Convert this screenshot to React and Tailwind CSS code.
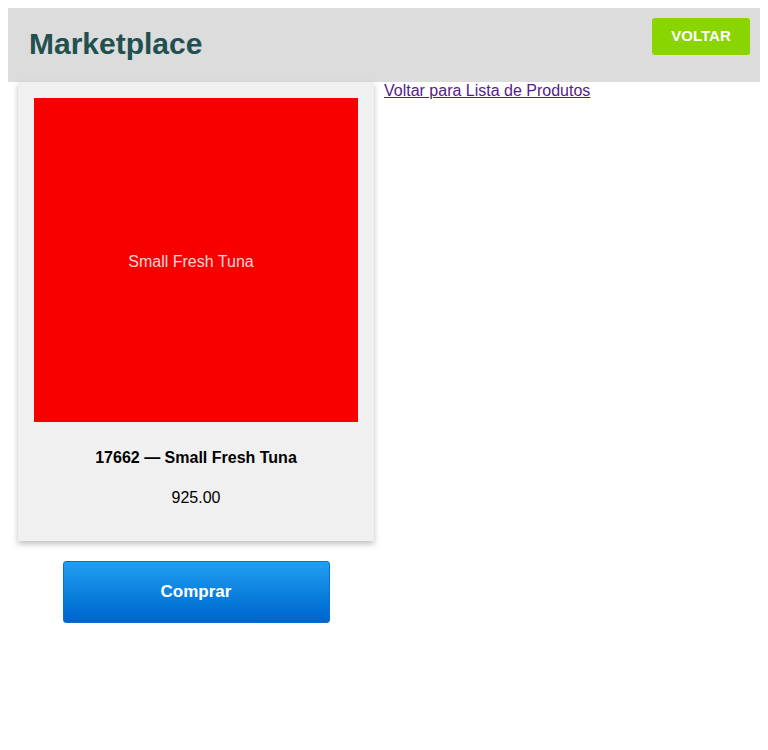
export default function App() {
  return (
    <div className="m-2 min-h-[734px] bg-white text-black" style={{ fontFamily: '"Liberation Sans", Arial, sans-serif' }}>
      <header className="flex h-[74px] items-start justify-between bg-[#dcdcdc] pl-[21px] pr-[10px]">
        <h1 className="mt-[19px] text-[30px] font-bold leading-[34px] text-[#224f4f]">Marketplace</h1>
        <button className="mt-[10px] h-[37px] w-[98px] rounded-[3px] bg-[#8ad400] text-[15px] font-bold text-white">
          VOLTAR
        </button>
      </header>

      <div className="flex items-start">
        <div className="ml-[10px] flex w-[356px] flex-col items-center">
          <div className="w-[356px] bg-[#f0f0f0] p-4 pb-[34px] shadow-[0_3px_6px_rgba(0,0,0,0.25)]">
            <div className="flex h-[324px] w-[324px] items-center justify-center bg-[#f80000] pr-[10px] pt-[4px]">
              <span className="text-[16px] font-light text-[#ffd6d6]">Small Fresh Tuna</span>
            </div>
            <div className="mt-[27px] text-center text-[16px] font-bold leading-[18px]">
              17662 — Small Fresh Tuna
            </div>
            <div className="mt-[22px] text-center text-[16px] leading-[18px]">925.00</div>
          </div>
          <button className="mt-5 h-[62px] w-[267px] rounded-[3px] border border-[#0a6fd0] bg-gradient-to-b from-[#20a0f2] to-[#0064cc] text-[17px] font-bold text-white">
            Comprar
          </button>
        </div>
        <a href="#" className="ml-[10px] mt-0 text-[16px] leading-[18px] text-[#551a8b] underline">
          Voltar para Lista de Produtos
        </a>
      </div>
    </div>
  );
}
